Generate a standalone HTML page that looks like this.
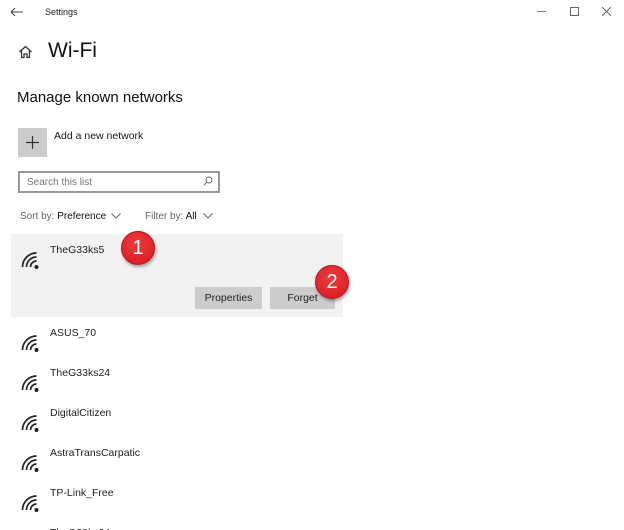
<!DOCTYPE html><html><head><style>
html,body{margin:0;width:624px;height:530px;overflow:hidden}
body{background:#fff;font-family:"Liberation Sans",sans-serif;color:#1a1a1a;position:relative}
.a{position:absolute;white-space:nowrap}
.btn{position:absolute;background:#ccc;font-size:10.5px;text-align:center;line-height:22px;height:22px;color:#222}
.badge{position:absolute;width:32px;height:32px;border-radius:50%;background:radial-gradient(circle at 45% 35%,#ee3b3e,#d4191f);border:1px solid #b51217;box-shadow:1px 2px 3px rgba(0,0,0,.35);color:#fff;font-size:20px;text-align:center;line-height:32px}
.nm{font-size:10.5px;color:#222}
</style></head><body>
<svg class="a" style="left:10px;top:7px" width="14" height="10"><path d="M1 5H13M1 5L5 1M1 5L5 9" stroke="#444" fill="none" stroke-width="1"/></svg>
<div class="a" style="left:45px;top:7px;font-size:9px;color:#222">Settings</div>
<div class="a" style="left:537px;top:11px;width:9px;border-top:1px solid #777"></div>
<div class="a" style="left:570px;top:7px;width:7px;height:7px;border:1px solid #666"></div>
<svg class="a" style="left:602px;top:7px" width="9" height="9"><path d="M0 0L9 9M9 0L0 9" stroke="#666"/></svg>
<svg class="a" style="left:18px;top:45px" width="15" height="14"><path d="M1.5 7L7.5 1.5L13.5 7M3.5 5.5V12.5H6V9H9V12.5H11.5V5.5" stroke="#333" fill="none" stroke-width="1.3"/></svg>
<div class="a" style="left:48px;top:39px;font-size:21px;color:#111">Wi-Fi</div>
<div class="a" style="left:17px;top:89px;font-size:15px;color:#111">Manage known networks</div>
<div class="a" style="left:18px;top:128px;width:29px;height:29px;background:#ccc"></div>
<svg class="a" style="left:26px;top:136px" width="13" height="13"><path d="M6.5 0V13M0 6.5H13" stroke="#333" stroke-width="1.2"/></svg>
<div class="a" style="left:54px;top:130px;font-size:10.5px">Add a new network</div>
<div class="a" style="left:18px;top:171px;width:198px;height:18px;border:2px solid #999"></div>
<div class="a" style="left:27px;top:177px;font-size:10px;color:#777">Search this list</div>
<svg class="a" style="left:203px;top:176px" width="10" height="10"><circle cx="6" cy="4" r="3" stroke="#666" fill="none"/><path d="M4 6L1 9" stroke="#666"/></svg>
<div class="a" style="left:20px;top:211px;font-size:10px;color:#666">Sort by: <span style="color:#111">Preference</span></div>
<svg class="a" style="left:111px;top:213px" width="10" height="6"><path d="M0.5 0.5L5 5L9.5 0.5" stroke="#666" fill="none"/></svg>
<div class="a" style="left:145px;top:211px;font-size:10px;color:#666">Filter by: <span style="color:#111">All</span></div>
<svg class="a" style="left:203px;top:213px" width="10" height="6"><path d="M0.5 0.5L5 5L9.5 0.5" stroke="#666" fill="none"/></svg>
<div class="a" style="left:11px;top:234px;width:332px;height:83px;background:#f2f2f2"></div>
<div class="btn" style="left:195px;top:287px;width:67px">Properties</div>
<div class="btn" style="left:270px;top:287px;width:65px">Forget</div>
<div id="rows"></div>
<div class="badge" style="left:121px;top:231px">1</div>
<div class="badge" style="left:315px;top:265px">2</div>
<script>
var n=["TheG33ks5","ASUS_70","TheG33ks24","DigitalCitizen","AstraTransCarpatic","TP-Link_Free","TheG33ks24"];
var y=[244,327,367,407,447,487,527],h="";
for(var i=0;i<n.length;i++){h+='<div class="a nm" style="left:50px;top:'+y[i]+'px">'+n[i]+'</div><svg class="a" style="left:21px;top:'+(y[i]+6)+'px" width="20" height="20"><g stroke="#222" stroke-width="1.7" fill="none"><path d="M9.5 17A6 6 0 0 1 15.5 11"/><path d="M5.5 17A10 10 0 0 1 15.5 7"/><path d="M1.5 17A14 14 0 0 1 15.5 3"/></g><circle cx="15.5" cy="17" r="2" fill="#222"/></svg>';}
document.getElementById("rows").innerHTML=h;
</script>
</body></html>
